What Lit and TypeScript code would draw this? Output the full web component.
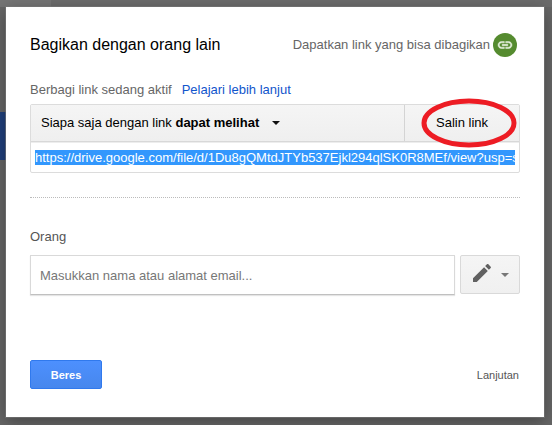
import { LitElement, html, css } from "lit";
import { customElement, query } from "lit/decorators.js";

@customElement("app-root")
export class AppRoot extends LitElement {
  static styles = css`
    :host {
      display: block;
      box-sizing: border-box;
      min-height: 100vh;
      padding: 7px 8px 8px 6px;
      position: relative;
      overflow: hidden;
      background: linear-gradient(to right, #757575 51px, #6c6c6c 51px) top / 100% 7px no-repeat,
        #666;
      font: 13px/16px "Liberation Sans", Arial, sans-serif;
      color: #000;
    }
    .page-bar {
      position: absolute;
      left: 0;
      top: 112px;
      width: 6px;
      height: 48px;
      background: #20407c;
    }
    .dialog {
      position: relative;
      background: #fff;
      padding: 26px 24px 28px;
      box-shadow: 0 0 0 1px rgba(120, 120, 120, 0.6), 0 4px 16px rgba(0, 0, 0, 0.35);
    }
    .row {
      display: flex;
      align-items: center;
    }
    .header {
      justify-content: space-between;
      padding-right: 3px;
    }
    h1 {
      margin: 0;
      font-size: 16px;
      line-height: 24px;
      font-weight: 400;
    }
    button {
      font: inherit;
      color: inherit;
      margin: 0;
      padding: 0;
      border: 0;
      background: none;
      cursor: pointer;
    }
    input {
      box-sizing: border-box;
      font: inherit;
      margin: 0;
      min-width: 0;
      outline: 0;
    }
    .get-link {
      display: flex;
      align-items: center;
      gap: 3px;
      color: #666;
    }
    .badge {
      display: block;
      width: 24px;
      height: 24px;
    }
    .status {
      margin-top: 25px;
      gap: 10px;
      color: #666;
    }
    .status a {
      color: #15c;
      text-decoration: none;
    }
    .share-box {
      margin-top: 6px;
      border: 1px solid #dcdcdc;
      border-radius: 2px;
    }
    .actions {
      display: flex;
      height: 36px;
      background: linear-gradient(#f5f5f5, #efefef);
      border-bottom: 1px solid #d8d8d8;
      box-shadow: 0 1px 0 #ededed;
    }
    .access {
      flex: 1;
      display: flex;
      align-items: center;
      gap: 13px;
      padding-left: 10px;
      text-align: left;
    }
    .copy {
      position: relative;
      width: 115px;
      border-left: 1px solid #d4d4d4;
    }
    .ring {
      position: absolute;
      left: 15px;
      top: -7px;
      width: 98px;
      height: 50px;
      pointer-events: none;
    }
    .link-field {
      display: block;
      width: 100%;
      height: 30px;
      padding: 0 4px;
      border: 0;
      background: transparent;
    }
    .link-field::selection {
      background: #3297fd;
      color: #fff;
    }
    .divider {
      margin: 24px 0 0;
      border: 0;
      border-top: 1px dotted #bbb;
    }
    .people-label {
      display: block;
      margin-top: 31px;
      color: #555;
    }
    .people {
      margin-top: 10px;
      gap: 5px;
      align-items: flex-start;
    }
    .people-field {
      flex: 1;
      height: 40px;
      padding: 0 9px;
      border: 1px solid #d9d9d9;
      border-bottom-color: #c0c0c0;
      box-shadow: 0 1px 1px rgba(0, 0, 0, 0.1);
    }
    .people-field::placeholder {
      color: #777;
      opacity: 1;
    }
    .role {
      display: flex;
      align-items: center;
      gap: 7px;
      box-sizing: border-box;
      width: 60px;
      height: 39px;
      padding-left: 9px;
      border: 1px solid #d9d9d9;
      border-radius: 2px;
      background: linear-gradient(#f5f5f5, #f0f0f0);
    }
    .role .pencil {
      margin-bottom: 3px;
    }
    .footer {
      margin-top: 65px;
      justify-content: space-between;
      font-size: 11px;
    }
    .done {
      box-sizing: border-box;
      width: 72px;
      height: 29px;
      border: 1px solid #3079ed;
      border-radius: 2px;
      background: linear-gradient(#4d90fe, #4787ed);
      color: #fff;
      font-weight: 700;
    }
    .advanced {
      padding-right: 1px;
      color: #555;
    }
  `;

  @query(".link-field") private linkField!: HTMLInputElement;

  firstUpdated() {
    this.linkField.focus({ preventScroll: true });
    this.linkField.select();
  }

  private selectLink() {
    this.linkField.focus();
    this.linkField.select();
  }

  render() {
    return html`
      <div class="page-bar"></div>
      <main class="dialog" role="dialog" aria-labelledby="title">
        <header class="row header">
          <h1 id="title">Bagikan dengan orang lain</h1>
          <button class="get-link" type="button">
            Dapatkan link yang bisa dibagikan
            <svg class="badge" viewBox="0 0 24 24" aria-hidden="true">
              <circle cx="12" cy="12" r="12" fill="#558b2f" />
              <path
                transform="translate(3.6 3.6) scale(.7)"
                fill="#e6f0de"
                stroke="#e6f0de"
                stroke-width=".7"
                d="M3.9 12c0-1.71 1.39-3.1 3.1-3.1h4V7H7c-2.76 0-5 2.24-5 5s2.24 5 5 5h4v-1.9H7c-1.71 0-3.1-1.39-3.1-3.1zM8 13h8v-2H8v2zm9-6h-4v1.9h4c1.71 0 3.1 1.39 3.1 3.1s-1.39 3.1-3.1 3.1h-4V17h4c2.76 0 5-2.24 5-5s-2.24-5-5-5z"
              />
            </svg>
          </button>
        </header>

        <div class="row status">
          <span>Berbagi link sedang aktif</span>
          <a href="#">Pelajari lebih lanjut</a>
        </div>

        <section class="share-box">
          <div class="actions">
            <button class="access" type="button" aria-haspopup="menu">
              <span>Siapa saja dengan link <b>dapat melihat</b></span>
              <svg width="8" height="4" viewBox="0 0 8 4" aria-hidden="true">
                <path d="M0 0h8L4 4z" fill="#111" />
              </svg>
            </button>
            <button class="copy" type="button" @click=${this.selectLink}>
              Salin link
              <svg class="ring" viewBox="0 0 98 50" aria-hidden="true">
                <ellipse cx="49" cy="25" rx="45" ry="22" fill="none" stroke="#ed1c24" stroke-width="5" />
              </svg>
            </button>
          </div>
          <input
            class="link-field"
            type="text"
            readonly
            aria-label="Link"
            value="https://drive.google.com/file/d/1Du8gQMtdJTYb537Ejkl294qlSK0R8MEf/view?usp=s"
          />
        </section>

        <hr class="divider" />

        <label class="people-label" for="people">Orang</label>
        <div class="row people">
          <input id="people" class="people-field" type="text" placeholder="Masukkan nama atau alamat email..." />
          <button class="role" type="button" aria-haspopup="menu" aria-label="Edit">
            <svg class="pencil" width="24" height="24" viewBox="0 0 24 24" aria-hidden="true">
              <path
                fill="#616161"
                d="M3 17.25V21h3.75L17.81 9.94l-3.75-3.75L3 17.25zM20.71 7.04c.39-.39.39-1.02 0-1.41l-2.34-2.34c-.39-.39-1.02-.39-1.41 0l-1.83 1.83 3.75 3.75 1.83-1.83z"
              />
            </svg>
            <svg width="8" height="4" viewBox="0 0 8 4" aria-hidden="true">
              <path d="M0 0h8L4 4z" fill="#777" />
            </svg>
          </button>
        </div>

        <footer class="row footer">
          <button class="done" type="button">Beres</button>
          <button class="advanced" type="button">Lanjutan</button>
        </footer>
      </main>
    `;
  }
}
